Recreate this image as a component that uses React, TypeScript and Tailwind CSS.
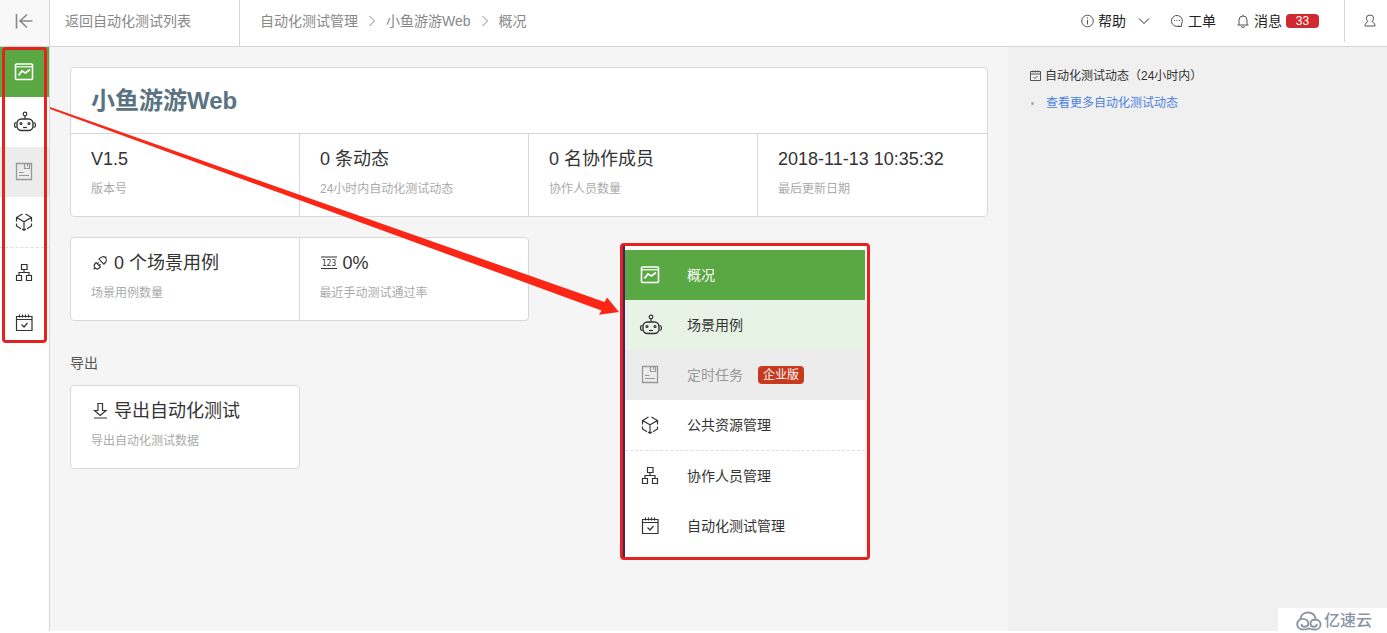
import React from "react";
import clsx from "clsx";

type IconProps = { className?: string };
type IconComponent = React.FC<IconProps>;

const Svg: React.FC<{
  className?: string;
  size?: number;
  children: React.ReactNode;
}> = ({ className, size = 24, children }) => (
  <svg
    viewBox={`0 0 ${size} ${size}`}
    fill="none"
    stroke="currentColor"
    strokeWidth="1.2"
    className={clsx("shrink-0", className)}
    aria-hidden="true"
  >
    {children}
  </svg>
);

const OverviewIcon: IconComponent = ({ className }) => (
  <Svg className={className}>
    <rect x="3.5" y="4" width="17" height="15.5" rx="1" strokeWidth="1.6" />
    <path d="M3.5 6.800h17" strokeWidth="1.2" />
    <path d="M6.5 15.500l3.500-4.500 3.500 2 4.500-3.500" strokeWidth="1.8" />
  </Svg>
);

const RobotIcon: IconComponent = ({ className }) => (
  <Svg className={className}>
    <circle cx="13" cy="4" r="1.8" />
    <path d="M13 6v3" />
    <rect x="5" y="9" width="16" height="11.500" rx="4.5" strokeWidth="1.4" />
    <path d="M4.500 12.500c-1.500 0-2 1-2 2.500s.5 2.500 2 2.500M21.500 12.500c1.500 0 2 1 2 2.500s-.5 2.500-2 2.500" />
    <circle cx="9" cy="13.500" r="1" />
    <circle cx="17" cy="13.500" r="1" />
    <path d="M11 17.500h4" />
  </Svg>
);

const TaskIcon: IconComponent = ({ className }) => (
  <Svg className={className}>
    <path d="M4.500 3.500h15v16h-15z" strokeWidth="1.3" />
    <path d="M12.500 3.500v5h5v-5M15.500 3.500v3M7 12.500h4.500M7 15.500h10" />
  </Svg>
);

const CubeIcon: IconComponent = ({ className }) => (
  <Svg className={className}>
    <path d="M10.500 4L4.500 7.500v4M13.500 4l6 3.500v4M4.500 13.500v2.500l4.500 2.700M19.500 13.500v2.500L15 18.700M4.500 7.500l7.500 4.300 7.500-4.300M12 11.800V20M10 19l2 1.200 2-1.200" />
  </Svg>
);

const OrgIcon: IconComponent = ({ className }) => (
  <Svg className={className}>
    <path d="M9.500 3.500h5.500v5H9.500zM4.500 14.500h5v5h-5zM14.500 14.500h5v5h-5zM12 8.500v3M7 14.500v-3h10v3" />
  </Svg>
);

const CalendarIcon: IconComponent = ({ className }) => (
  <Svg className={className}>
    <path d="M4.500 5.500h15.500v14H4.500zM4.500 8.500h15.500M7.500 3.500v3M10.500 3.500v3M13.500 3.500v3M16.500 3.500v3M9.500 13.500l2.500 2.500 3.500-4" />
  </Svg>
);

const SmallCalendarIcon: IconComponent = ({ className }) => (
  <Svg className={className} size={12}>
    <path d="M1.500 1.500h10v9h-10zM1.500 4h10M4 .5v2M6.500 .5v2M9 .5v2M4.500 7l1.500 1.500L8.500 6" strokeWidth="1" />
  </Svg>
);

const CollapseIcon: IconComponent = ({ className }) => (
  <Svg className={className}>
    <path d="M4.500 5v14.500M20.500 12H7.500M15 5.500L8 12l7 6.500" strokeWidth="1.6" />
  </Svg>
);

const InfoIcon: IconComponent = ({ className }) => (
  <Svg className={className} size={14}>
    <circle cx="7.5" cy="7" r="5.8" strokeWidth="1" />
    <path d="M7.500 6v4.500M7.500 3.500v1.200" strokeWidth="1" />
  </Svg>
);

const TicketIcon: IconComponent = ({ className }) => (
  <Svg className={className} size={14}>
    <path d="M9.500 11.800A5.500 5.500 0 1 1 11.500 10v2.500H8" strokeWidth="1" />
    <path d="M4 6.500h1M6.500 6.500h1M9 6.500h1" strokeWidth="1" />
  </Svg>
);

const BellIcon: IconComponent = ({ className }) => (
  <Svg className={className} size={14}>
    <path
      d="M1.500 11h11M3 11V6a4 4 0 0 1 8 0v5M7 2V.7M5.500 12a1.500 1.500 0 0 0 3 0"
      strokeWidth="1"
    />
  </Svg>
);

const UserIcon: IconComponent = ({ className }) => (
  <Svg className={className} size={14}>
    <path
      d="M5 7.500C3.700 6.500 3.500 5 3.500 4a3.500 3 0 0 1 7 0c0 1-.2 2.500-1.500 3.500M5 7.500c-1.500.8-3 2-3 4.500h10c0-2.500-1.500-3.700-3-4.500"
      strokeWidth="1"
    />
  </Svg>
);

const PlugIcon: IconComponent = ({ className }) => (
  <Svg className={className} size={18}>
    <g transform="rotate(-45 9 9)">
      <path d="M6.500 6H5a3 3 0 0 0 0 6h1.500zM6.500 7.700h2M6.500 10.300h2M11 5.500h1.500a3.500 3 0 0 1 0 7H11zM2 9H0M16 9h2" />
    </g>
  </Svg>
);

const CountIcon: IconComponent = ({ className }) => (
  <Svg className={className} size={18}>
    <path d="M1 3h16M1 14.500h16" />
    <text
      x="9"
      y="12"
      textAnchor="middle"
      fill="currentColor"
      stroke="none"
      fontSize="8"
      fontFamily="DejaVu Sans Mono, monospace"
    >
      123
    </text>
  </Svg>
);

const ExportIcon: IconComponent = ({ className }) => (
  <Svg className={className} size={18}>
    <path d="M7 1.500h4.500v7H15L9.200 13.500 3.500 8.500H7zM3 16h13" />
  </Svg>
);

const ChevronIcon: IconComponent = ({ className }) => (
  <Svg className={className} size={12}>
    <path d="M3.500 1l5 5-5 5" strokeWidth="1" />
  </Svg>
);

const CloudLogo: IconComponent = ({ className }) => (
  <svg
    viewBox="0 0 26 20"
    fill="none"
    stroke="currentColor"
    strokeWidth="1.900"
    strokeLinecap="round"
    className={className}
    aria-hidden="true"
  >
    <path d="M4.500 7.500C5 4 8 1.500 12 1.500c3.500 0 6.500 2 7.500 5.500" />
    <path d="M13 17.500c-1.500.9-4 1-6.500 1a5.300 5.300 0 0 1 0-10.600c3.500 0 5.800 2 5.800 4.600 0 2.200-1.800 3.200-3.600 3.200-1.900 0-3-.9-3-2" />
    <path d="M13 17.500c1.500.9 4 1 6 1a5 5 0 0 0 1-10c-3.500 0-5.500 1.800-5.500 4.200 0 2 1.700 3 3.300 3 1.800 0 2.900-.9 2.900-2" />
  </svg>
);

interface NavItem {
  label: string;
  Icon: IconComponent;
  active?: boolean;
  hovered?: boolean;
  disabled?: boolean;
  divided?: boolean;
}

const navItems: NavItem[] = [
  { label: "概况", Icon: OverviewIcon, active: true },
  { label: "场景用例", Icon: RobotIcon, hovered: true },
  { label: "定时任务", Icon: TaskIcon, disabled: true },
  { label: "公共资源管理", Icon: CubeIcon },
  { label: "协作人员管理", Icon: OrgIcon, divided: true },
  { label: "自动化测试管理", Icon: CalendarIcon },
];

const NavList: React.FC<{ expanded?: boolean }> = ({ expanded }) => (
  <nav>
    {navItems.map(({ label, Icon, active, hovered, disabled, divided }) => (
      <a
        key={label}
        href="#"
        aria-label={label}
        className={clsx(
          "box-content flex h-[50px] items-center text-sm",
          expanded ? "pl-[13px]" : "pl-3",
          active && "bg-[#5aa843] text-white",
          disabled && "bg-[#ececec] text-[#999]",
          !active && !disabled && "text-[#333]",
          expanded && hovered && "bg-[#e6f3e5]",
          divided && "border-t border-dashed border-[#ddd]"
        )}
      >
        <Icon className="size-6" />
        {expanded && <span className="ml-[25px]">{label}</span>}
        {expanded && disabled && (
          <span className="ml-[15px] rounded-sm bg-[#c73a1e] px-[5px] text-xs leading-[18px] text-white">
            企业版
          </span>
        )}
      </a>
    ))}
  </nav>
);

interface StatProps {
  value: string;
  label: string;
  Icon?: IconComponent;
}

const Stat: React.FC<StatProps> = ({ value, label, Icon }) => (
  <div className="h-[82px] border-r border-[#d5d8da] px-5 pt-3 last:border-r-0">
    <div className="flex items-center gap-[5px] text-lg leading-[26px] text-[#333]">
      {Icon && <Icon className="size-[18px]" />}
      {value}
    </div>
    <div className="mt-2 text-xs leading-[18px] text-[#aaa]">{label}</div>
  </div>
);

const Header = () => (
  <header className="flex h-[47px] border-b border-[#d5d5d5] bg-white text-sm text-[#888]">
    <button
      aria-label="收起"
      className="flex w-[50px] items-center border-r border-[#d5d5d5] bg-[#f8f8f8] pb-1 pl-3"
    >
      <CollapseIcon className="size-6" />
    </button>
    <a
      href="#"
      className="flex w-[190px] items-center border-r border-[#d5d5d5] pb-1 pl-[15px]"
    >
      返回自动化测试列表
    </a>
    <div className="flex items-center pb-1 pl-5">
      <a href="#">自动化测试管理</a>
      <ChevronIcon className="mx-2 size-3" />
      <a href="#">小鱼游游Web</a>
      <ChevronIcon className="mx-2 size-3" />
      <span>概况</span>
    </div>
    <div className="mb-1 ml-auto flex items-center text-[#222]">
      <button className="flex items-center gap-1">
        <InfoIcon className="size-3.5 text-[#555]" />
        帮助
        <ChevronIcon className="ml-2 size-3 rotate-90" />
      </button>
      <a href="#" className="ml-5 flex items-center gap-1">
        <TicketIcon className="size-3.5 text-[#555]" />
        工单
      </a>
      <a href="#" className="ml-5 flex items-center gap-1">
        <BellIcon className="size-3.5 text-[#555]" />
        消息
        <span className="w-[33px] rounded-sm bg-[#cf2a30] text-center text-xs leading-[14px] text-white">
          33
        </span>
      </a>
      <button
        aria-label="用户"
        className="ml-[25px] flex h-full w-[43px] items-center border-l border-[#d5d5d5] pl-[18px]"
      >
        <UserIcon className="size-3.5 text-[#555]" />
      </button>
    </div>
  </header>
);

const card = "rounded-sm border border-[#d5d8da] bg-white";

const Overview = () => (
  <main className="flex-1 bg-[#f5f5f5] p-5">
    <section className={card}>
      <h1 className="flex h-[66px] items-center border-b border-[#d5d8da] px-5 text-2xl font-bold text-[#5b7282]">
        小鱼游游Web
      </h1>
      <div className="grid grid-cols-4">
        <Stat value="V1.5" label="版本号" />
        <Stat value="0 条动态" label="24小时内自动化测试动态" />
        <Stat value="0 名协作成员" label="协作人员数量" />
        <Stat value="2018-11-13 10:35:32" label="最后更新日期" />
      </div>
    </section>

    <section className={clsx(card, "mt-5 grid w-1/2 grid-cols-2")}>
      <Stat Icon={PlugIcon} value="0 个场景用例" label="场景用例数量" />
      <Stat Icon={CountIcon} value="0%" label="最近手动测试通过率" />
    </section>

    <h2 className="mt-8 text-sm text-[#555]">导出</h2>
    <section className={clsx(card, "mt-3 w-1/4")}>
      <Stat Icon={ExportIcon} value="导出自动化测试" label="导出自动化测试数据" />
    </section>
  </main>
);

const Activity = () => (
  <aside className="w-[379px] bg-[#f0f0f0] px-[21px] pt-5 text-xs">
    <h2 className="flex items-center gap-1 leading-[18px] text-[#333]">
      <SmallCalendarIcon className="size-3 text-[#555]" />
      自动化测试动态（24小时内）
    </h2>
    <ul className="mt-2 leading-5">
      <li className="flex items-center gap-3 pl-[2px]">
        <span className="size-[3px] rounded-full bg-[#aaa]" />
        <a href="#" className="text-[#4a80e0]">
          查看更多自动化测试动态
        </a>
      </li>
    </ul>
  </aside>
);

// Red marks that point from the collapsed sidebar to its expanded menu
const Annotations = () => (
  <>
    <div className="pointer-events-none absolute top-[47px] left-[2px] h-[296px] w-[45px] rounded-sm border-3 border-[#e42320]" />
    <svg
      className="pointer-events-none absolute top-0 left-0"
      width="640"
      height="340"
      fill="#fb2616"
      aria-hidden="true"
    >
      <path d="M50 107L604.500 302l2.500-4.500L619 312l-20 2.800 2.500-4.300L50 109z" />
    </svg>
    <div className="absolute top-[243px] left-[620px] h-[317px] w-[250px] rounded-sm border-3 border-[#e42320] bg-white">
      <div className="h-full border-r-2 border-l-2 border-r-[#f5f5f5] border-l-[#39256b] pt-1">
        <NavList expanded />
      </div>
    </div>
  </>
);

export default function App() {
  return (
    <div className="relative flex min-h-screen flex-col bg-white pb-[2px] font-['Liberation_Sans','Noto_Sans_CJK_SC',sans-serif]">
      <Header />
      <div className="flex flex-1">
        <div className="w-[50px] border-r border-[#d5d5d5] bg-white">
          <NavList />
        </div>
        <Overview />
        <Activity />
      </div>
      <Annotations />
      <div className="absolute right-0 bottom-0 flex h-[25px] w-[109px] items-center bg-white pl-[18px] text-base font-medium text-[#8b95a3]">
        <CloudLogo className="mr-0.5 h-5 w-[26px]" />
        亿速云
      </div>
    </div>
  );
}
